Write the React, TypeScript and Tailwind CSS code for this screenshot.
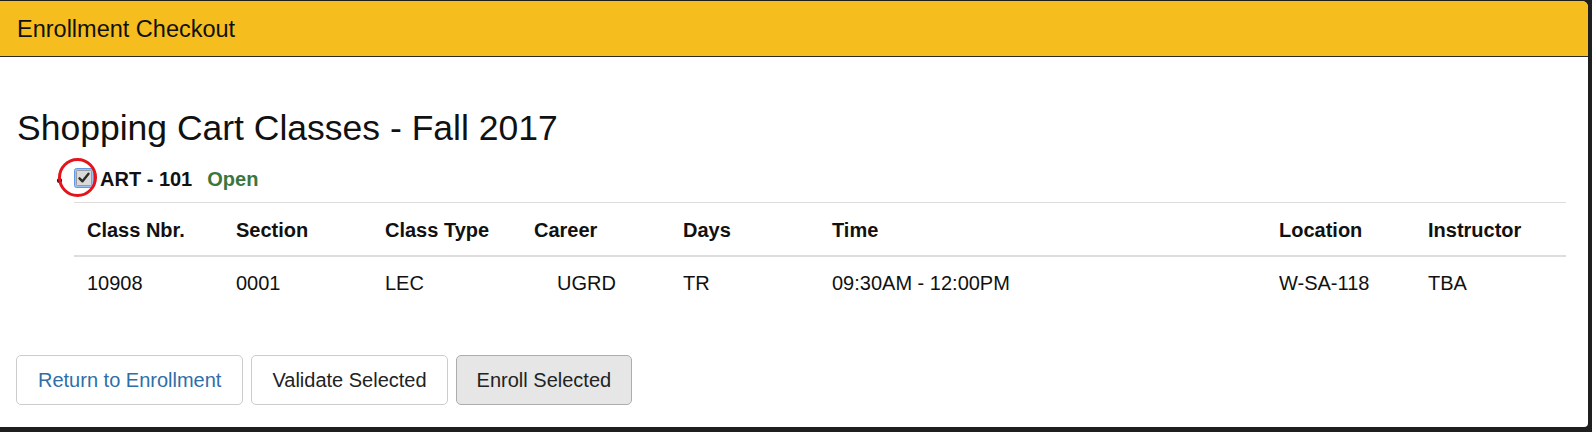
import React from "react";

const cols = ["Class Nbr.", "Section", "Class Type", "Career", "Days", "Time", "Location", "Instructor"];
const row = ["10908", "0001", "LEC", "UGRD", "TR", "09:30AM - 12:00PM", "W-SA-118", "TBA"];

export default function App() {
  const grid = "grid grid-cols-[149px_149px_149px_149px_149px_447px_149px_151px]";
  return (
    <div
      className="w-[1592px] h-[432px] bg-[#1f1f1f] pt-px pr-[4px] pb-[5px] overflow-hidden"
      style={{ fontFamily: '"Liberation Sans", Arial, sans-serif' }}
    >
      <div className="h-full bg-white rounded-tr-[6px] rounded-br-[4px] overflow-hidden flex flex-col">
        <div className="h-[56px] bg-[#f6bd1e] border-b border-[#2a2a2a] flex items-center pl-[17px] shrink-0">
          <span className="text-[23.5px] leading-[26px] text-[#111]">Enrollment Checkout</span>
        </div>

        <div className="pl-[17px] pt-[51px]">
          <h1 className="text-[35.5px] leading-[40px] text-[#111] font-normal">Shopping Cart Classes - Fall 2017</h1>
        </div>

        <div className="relative h-[24px] mt-[19px] flex items-center">
          <span className="ml-[57px] w-[5px] h-[5px] rounded-full bg-[#111] mt-[2px]" />
          <div className="relative ml-[12px] w-[20px] h-[20px] mt-[-2px]">
            <svg width="20" height="20" viewBox="0 0 20 20">
              <rect x="0.5" y="0.5" width="19" height="19" rx="2" fill="#9cc1f2" stroke="#5f98e6" />
              <rect x="2.5" y="2.5" width="15" height="15" rx="1" fill="#d9d9d9" stroke="#9a9a9a" />
              <path d="M5.5 10.3 L8.5 13.3 L14.5 5.8" fill="none" stroke="#2b2b2b" strokeWidth="2.4" strokeLinecap="round" strokeLinejoin="round" />
            </svg>
            <div className="absolute left-[-16px] top-[-10px] w-[39px] h-[39px] rounded-full border-[3px] border-[#e3141b]" />
          </div>
          <span className="ml-[6px] text-[20px] leading-[24px] font-bold text-[#111]">ART - 101</span>
          <span className="ml-[15px] text-[20px] leading-[24px] font-bold text-[#3c763d]">Open</span>
        </div>

        <div className="ml-[74px] w-[1492px] mt-[11px] border-t border-[#dddddd]">
          <div className={`${grid} h-[54px] border-b-2 border-[#dddddd]`}>
            {cols.map((c) => (
              <div key={c} className="pl-[13px] pt-[15px] text-[20px] leading-[24px] font-bold text-[#111]">
                {c}
              </div>
            ))}
          </div>
          <div className={`${grid} h-[48px]`}>
            {row.map((c, i) => (
              <div
                key={i}
                className={`${i === 3 ? "pl-[36px]" : "pl-[13px]"} pt-[14px] text-[20px] leading-[24px] text-[#111]`}
              >
                {c}
              </div>
            ))}
          </div>
        </div>

        <div className="flex gap-[8px] pl-[16px] mt-[50px]">
          <button className="h-[50px] px-[21px] border border-[#cccccc] rounded-[5px] bg-white text-[20px] text-[#2f6ea8]">
            Return to Enrollment
          </button>
          <button className="h-[50px] px-[20px] border border-[#cccccc] rounded-[5px] bg-white text-[20px] text-[#222]">
            Validate Selected
          </button>
          <button className="h-[50px] px-[20px] border border-[#adadad] rounded-[5px] bg-[#e6e6e6] text-[20px] text-[#222]">
            Enroll Selected
          </button>
        </div>
      </div>
    </div>
  );
}
